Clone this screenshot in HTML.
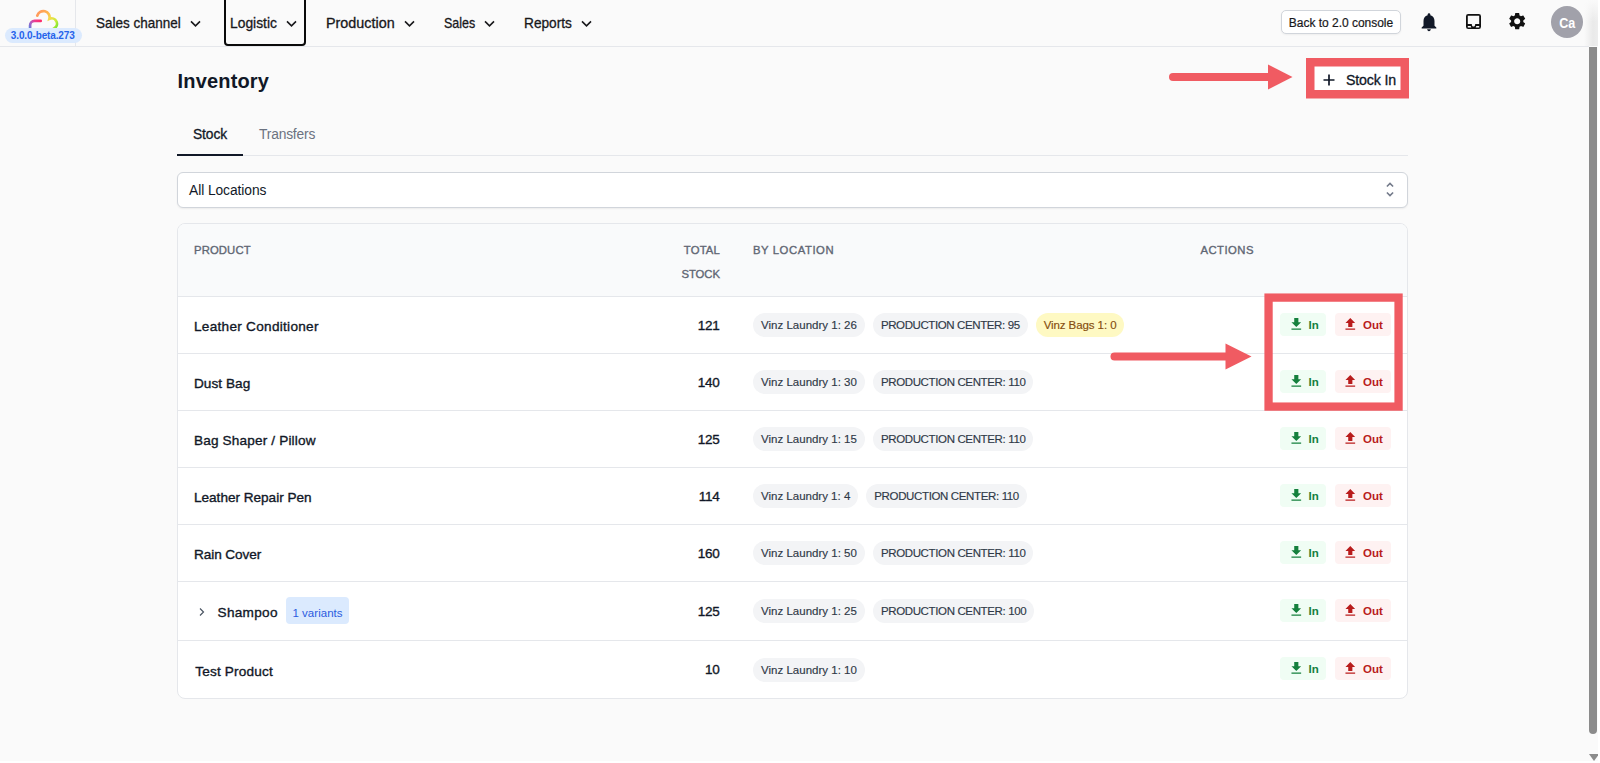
<!DOCTYPE html>
<html lang="en">
<head>
<meta charset="utf-8">
<title>Inventory</title>
<style>
*{box-sizing:border-box;margin:0;padding:0}
html,body{width:1600px;height:763px;overflow:hidden;background:#fff}
body{font-family:"Liberation Sans",sans-serif;color:#111827;position:relative;-webkit-font-smoothing:antialiased}
.app{position:absolute;left:0;top:0;width:1598px;height:761px;background:#fafafa;overflow:hidden}
/* header */
header{position:absolute;left:0;top:0;width:1589px;height:47px;border-bottom:1px solid #e5e7eb}
.logo{position:absolute;left:0;top:0;width:76px;height:46px;border-right:1px solid #e5e7eb}
.logo svg{position:absolute;left:24px;top:4px}
.ver{position:absolute;left:5px;top:28px;width:77px;height:15px;border-radius:8px;background:#dbeafe;color:#2563eb;font-size:10px;font-weight:700;line-height:16px;text-align:center;white-space:nowrap;text-indent:-1.5px}
nav .it{position:absolute;top:0;height:46px;line-height:46px;font-size:14.2px;white-space:nowrap;color:#18181b;-webkit-text-stroke:.3px #18181b}
nav .it svg{position:absolute;top:19.6px}
.sx{display:inline-block;transform-origin:0 50%}
nav .focus{position:absolute;left:224px;top:-4px;width:82px;height:50px;border:2px solid #0a0a0a;border-radius:4px}
.back{position:absolute;left:1281px;top:10px;width:120px;height:24px;border:1px solid #d1d5db;border-radius:5px;background:#fff;font-size:12px;line-height:24px;-webkit-text-stroke:.2px #18181b;text-align:center;color:#18181b;white-space:nowrap;box-shadow:0 1px 2px rgba(0,0,0,.05)}
.hicon{position:absolute}
.avatar{position:absolute;left:1551px;top:5.5px;width:32px;height:32px;border-radius:50%;background:#a1a1aa;color:#fff;font-size:14.4px;font-weight:700;line-height:35.6px;text-align:center;overflow:hidden}
.avatar span{display:inline-block;transform:scaleX(.87)}
/* scrollbar */
.sb-shade{position:absolute;left:1584px;top:0;width:14px;height:46px;background:linear-gradient(to bottom,#fafafa 0,rgba(250,250,250,0) 22px),linear-gradient(to right,rgba(0,0,0,0),rgba(0,0,0,.065) 65%,rgba(0,0,0,.05))}
.sb-thumb{position:absolute;left:1589px;top:47px;width:8px;height:687px;background:#8b8b8b;border-radius:0 0 4px 4px}
.sb-arrow{position:absolute;left:1588.5px;top:753.5px;width:0;height:0;border-left:5px solid transparent;border-right:5px solid transparent;border-top:7px solid #8b8b8b}
/* main */
h1{position:absolute;left:177.6px;top:66.4px;font-size:20px;line-height:30px;font-weight:700;color:#111827;white-space:nowrap}
.tabs{position:absolute;left:177px;top:112px;width:1231px;height:44px;border-bottom:1px solid #e5e7eb}
.tab{position:absolute;top:0;height:44px;line-height:45px;font-size:13.8px;white-space:nowrap}
.tab.on{left:0;width:66px;text-align:center;color:#111827;border-bottom:2px solid #111827;-webkit-text-stroke:.3px #111827}
.tab.off{left:82px;color:#6b7280}
.select{position:absolute;left:177px;top:172px;width:1231px;height:36px;background:#fff;border:1px solid #d1d5db;border-radius:6px;box-shadow:0 1px 2px rgba(0,0,0,.06);font-size:13.8px;line-height:35px;padding-left:11px;color:#111827}
.select svg{position:absolute;right:12.1px;top:8px}
/* table */
.card{position:absolute;left:177px;top:223px;width:1231px;height:476px;border:1px solid #e5e7eb;border-radius:8px;background:#fff;overflow:hidden}
table{border-collapse:separate;border-spacing:0;width:1229px;table-layout:fixed}
thead th{height:72px;background:#f9fafb}
th{font-size:11.3px;font-weight:400;color:#5f6673;-webkit-text-stroke:.35px #5f6673;letter-spacing:.35px;text-align:left;vertical-align:top;line-height:24px;padding-top:14px;text-transform:uppercase}
tbody td{height:57px;border-top:1px solid #e5e7eb}
tbody tr.tall td{height:59px}
tbody tr:last-child td{height:58px}
td{vertical-align:middle;white-space:nowrap}
.c1{width:459px;padding-left:16px}
.c2{width:99px;text-align:right;padding-right:16px}
th.c2{text-align:right}
.c3{width:447px;padding-left:17px}
.c4{width:225px;padding-left:16px}
th.c4{padding-left:17.5px}
.name{position:relative;top:1.2px;font-size:13.6px;color:#111827;-webkit-text-stroke:.35px #111827}
.name.nt{margin-left:1.2px}
tr.tall .name{top:2px}
tr.tall .chev{top:.5px}
.num{position:relative;top:-0.2px;left:-0.6px;font-size:13.5px;color:#111827;-webkit-text-stroke:.35px #111827}
.pill{display:inline-block;height:24px;line-height:24px;border-radius:12px;background:#f3f4f6;color:#2f3947;-webkit-text-stroke:.15px #2f3947;font-size:11.5px;padding:0 8px;margin-right:8px;vertical-align:middle}
.pill.y{background:#fef9c3;color:#854d0e;-webkit-text-stroke:.15px #854d0e}
.var{display:inline-block;position:relative;top:-.8px;height:27px;line-height:32px;border-radius:4px;background:#dbeafe;color:#2b5ce0;font-size:11.5px;padding:0 6px;margin-left:8.5px;vertical-align:middle}
.chev{margin-left:4px;margin-right:11.5px;vertical-align:middle;position:relative;top:0px}
.act{display:inline-block;height:23px;line-height:25px;top:-1px;border-radius:4px;font-size:11.5px;font-weight:700;vertical-align:middle;position:relative}
.act.in{width:46px;background:#f0fdf4;color:#15803d;margin-left:81px;padding-left:28.4px}
.act.out{width:56px;background:#fef2f2;color:#b91c1c;margin-left:9px;padding-left:28px}
.act.out svg{left:7.3px}
.act svg{position:absolute;left:7.8px;top:3.2px}
/* stock in */
.stockin{position:absolute;left:1314px;top:66px;width:88px;height:25px;background:#fff;font-size:14.2px;line-height:29px;color:#111827;white-space:nowrap;-webkit-text-stroke:.3px #111827;padding-left:32px;overflow:hidden}
.stockin svg{position:absolute;left:9px;top:8px}
/* annotations */
.ann{position:absolute;border:8px solid #f05b62;z-index:5}
.arrow{position:absolute;z-index:5}
</style>
</head>
<body>
<div class="app">
<header>
  <div class="logo">
    <svg width="40" height="24" viewBox="0 0 40 24" fill="none" stroke-width="2.7" stroke-linecap="round">
      <defs>
        <linearGradient id="g1" gradientUnits="userSpaceOnUse" x1="17" y1="16" x2="5" y2="24"><stop offset="0" stop-color="#ff2a68"/><stop offset=".4" stop-color="#ee3c90"/><stop offset=".72" stop-color="#a862c6"/><stop offset="1" stop-color="#5a7cdb"/></linearGradient>
        <linearGradient id="g2" gradientUnits="userSpaceOnUse" x1="12" y1="9" x2="33" y2="24"><stop offset="0" stop-color="#ff9660"/><stop offset=".35" stop-color="#ffb350"/><stop offset=".56" stop-color="#f3dc4c"/><stop offset=".8" stop-color="#c9ec38"/><stop offset="1" stop-color="#74e534"/></linearGradient>
      </defs>
      <path d="M16.7 16.9 H10.6 A4.5 4.5 0 0 0 6.100 21.400 V25" stroke="url(#g1)"/>
      <path d="M13.3 11.7 A6.2 6.2 0 0 1 25.400 14.900 A4.3 4.3 0 1 1 29.900 24.5" stroke="url(#g2)"/>
    </svg>
    <div class="ver"><span class="t" style="letter-spacing:-0.13px">3.0.0-beta.273</span></div>
  </div>
  <nav>
    <div class="focus"></div>
    <div class="it" style="left:96px"><span class="t sx" style="transform:scaleX(0.950)">Sales channel</span><svg style="left:93.7px" width="11" height="8" viewBox="0 0 11 8"><path d="M1 1.4 L5.5 5.8 L10 1.4" fill="none" stroke="#18181b" stroke-width="1.6"/></svg></div>
    <div class="it" style="left:230px"><span class="t sx" style="transform:scaleX(0.975)">Logistic</span><svg style="left:56px" width="11" height="8" viewBox="0 0 11 8"><path d="M1 1.4 L5.5 5.8 L10 1.4" fill="none" stroke="#18181b" stroke-width="1.6"/></svg></div>
    <div class="it" style="left:326px"><span class="t sx" style="transform:scaleX(1.013)">Production</span><svg style="left:78px" width="11" height="8" viewBox="0 0 11 8"><path d="M1 1.4 L5.5 5.8 L10 1.4" fill="none" stroke="#18181b" stroke-width="1.6"/></svg></div>
    <div class="it" style="left:444px"><span class="t sx" style="transform:scaleX(0.879)">Sales</span><svg style="left:40px" width="11" height="8" viewBox="0 0 11 8"><path d="M1 1.4 L5.5 5.8 L10 1.4" fill="none" stroke="#18181b" stroke-width="1.6"/></svg></div>
    <div class="it" style="left:524px"><span class="t sx" style="transform:scaleX(0.964)">Reports</span><svg style="left:56.8px" width="11" height="8" viewBox="0 0 11 8"><path d="M1 1.4 L5.5 5.8 L10 1.4" fill="none" stroke="#18181b" stroke-width="1.6"/></svg></div>
  </nav>
  <div class="back"><span class="t" style="letter-spacing:-0.02px">Back to 2.0 console</span></div>
  <svg class="hicon" style="left:1418.2px;top:10.7px" width="22" height="22" viewBox="0 0 24 24"><path fill="#111827" d="M12 22c1.1 0 2-.9 2-2h-4c0 1.1.89 2 2 2zm6-6v-5c0-3.07-1.64-5.64-4.5-6.32V4c0-.83-.67-1.5-1.5-1.5s-1.5.67-1.5 1.5v.68C7.63 5.36 6 7.92 6 11v5l-2 2v1h16v-1l-2-2z"/></svg>
  <svg class="hicon" style="left:1465.9px;top:13.9px" width="15" height="15" viewBox="0 0 15 15"><path fill="#111" fill-rule="evenodd" d="M2.3 0H12.7A2.3 2.3 0 0 1 15 2.3V12.7A2.3 2.3 0 0 1 12.700 15H2.3A2.3 2.3 0 0 1 0 12.700V2.3A2.3 2.3 0 0 1 2.3 0ZM1.8 1.8V9.9H5.800C5.800 11.600 6.600 12.600 7.500 12.600C8.400 12.600 9.200 11.600 9.200 9.900H13.2V1.8ZM1.8 12H4.700L5.300 13.4H1.8ZM13.2 12H10.3L9.700 13.400H13.2Z"/></svg>
  <svg class="hicon" style="left:1506.6px;top:11.3px" width="20.4" height="20.4" viewBox="0 0 24 24"><path fill="#111" d="M19.14 12.94c.04-.3.06-.61.06-.94 0-.32-.02-.64-.07-.94l2.03-1.58c.18-.14.23-.41.12-.61l-1.92-3.32c-.12-.22-.37-.29-.59-.22l-2.39.96c-.5-.38-1.03-.7-1.62-.94l-.36-2.54c-.04-.24-.24-.41-.48-.41h-3.84c-.24 0-.43.17-.47.41l-.36 2.54c-.59.24-1.13.57-1.62.94l-2.39-.96c-.22-.08-.47 0-.59.22L2.74 8.87c-.12.21-.08.47.12.61l2.03 1.58c-.05.3-.09.63-.09.94s.02.64.07.94l-2.03 1.58c-.18.14-.23.41-.12.61l1.92 3.32c.12.22.37.29.59.22l2.39-.96c.5.38 1.03.7 1.62.94l.36 2.54c.05.24.24.41.48.41h3.84c.24 0 .44-.17.47-.41l.36-2.54c.59-.24 1.13-.56 1.62-.94l2.39.96c.22.08.47 0 .59-.22l1.92-3.32c.12-.22.07-.47-.12-.61l-2.01-1.58zM12 15.6c-1.98 0-3.600-1.62-3.600-3.600s1.620-3.600 3.600-3.600 3.600 1.620 3.600 3.600-1.620 3.600-3.600 3.600z"/></svg>
  <div class="avatar"><span>Ca</span></div>
</header>
<div class="sb-shade"></div>
<div class="sb-thumb"></div>
<div class="sb-arrow"></div>

<main>
  <h1><span class="t" style="letter-spacing:0.16px">Inventory</span></h1>
  <div class="stockin"><svg width="12" height="12" viewBox="0 0 12 12"><path d="M6 0.5V11.5M0.5 6H11.5" stroke="#111827" stroke-width="1.7" fill="none"/></svg><span class="t" style="letter-spacing:-0.15px">Stock In</span></div>
  <svg class="arrow" style="left:1300px;top:52px" width="116" height="54" viewBox="0 0 116 54"><rect x="10.25" y="10.25" width="94.5" height="32" fill="none" stroke="#f05b62" stroke-width="8.5"/></svg>
  <svg class="arrow" style="left:1165px;top:60px" width="132" height="34" viewBox="0 0 132 34"><path d="M8 17H106" stroke="#f05b62" stroke-width="8" stroke-linecap="round" fill="none"/><path d="M103 4.5L127.5 17L103 29.5Z" fill="#f05b62"/></svg>
  <svg class="arrow" style="left:1258px;top:287px" width="152" height="130" viewBox="0 0 152 130"><rect x="10.55" y="10.6" width="130" height="109" fill="none" stroke="#f05b62" stroke-width="8.3"/></svg>
  <svg class="arrow" style="left:1106px;top:339px" width="150" height="34" viewBox="0 0 150 34"><path d="M8.5 17.5H122" stroke="#f05b62" stroke-width="8" stroke-linecap="round" fill="none"/><path d="M119.5 4.5L145.5 17.5L119.5 30.5Z" fill="#f05b62"/></svg>
  <div class="tabs"><div class="tab on"><span class="t" style="letter-spacing:-0.11px">Stock</span></div><div class="tab off"><span class="t" style="letter-spacing:-0.18px">Transfers</span></div></div>
  <div class="select"><span class="t" style="letter-spacing:-0.07px">All Locations</span><svg width="10" height="18" viewBox="0 0 10 18"><path d="M1.9 5.5 L5 2.4 L8.1 5.5 M1.9 11.5 L5 14.6 L8.1 11.5" fill="none" stroke="#737a8a" stroke-width="1.6"/></svg></div>
  <div class="card">
  <table>
    <thead><tr><th class="c1"><span class="t" style="letter-spacing:0.12px">Product</span></th><th class="c2"><span class="t" style="letter-spacing:0.16px">Total</span><br><span class="t" style="letter-spacing:-0.02px">Stock</span></th><th class="c3"><span class="t" style="letter-spacing:0.57px">By Location</span></th><th class="c4"><span class="t" style="letter-spacing:0.46px">Actions</span></th></tr></thead>
    <tbody id="tb">
    <tr><td class="c1"><span class="name" style="letter-spacing:0.28px">Leather Conditioner</span></td><td class="c2"><span class="num" style="letter-spacing:-0.30px">121</span></td><td class="c3"><span class="pill" style="letter-spacing:0.01px">Vinz Laundry 1: 26</span><span class="pill" style="letter-spacing:-0.39px">PRODUCTION CENTER: 95</span><span class="pill y" style="letter-spacing:-0.08px">Vinz Bags 1: 0</span></td><td class="c4"><span class="act in"><svg width="16.6" height="16.6" viewBox="0 0 24 24"><path fill="#15803d" d="M19 9h-4V3H9v6H5l7 7 7-7zM5 18v2h14v-2H5z"/></svg><span style="letter-spacing:0.09px">In</span></span><span class="act out"><svg width="16.6" height="16.6" viewBox="0 0 24 24"><path fill="#b91c1c" d="M9 16h6v-6h4l-7-7-7 7h4v6zm-4 2h14v2H5v-2z"/></svg><span>Out</span></span></td></tr>
    <tr><td class="c1"><span class="name" style="letter-spacing:0.04px">Dust Bag</span></td><td class="c2"><span class="num" style="letter-spacing:-0.30px">140</span></td><td class="c3"><span class="pill" style="letter-spacing:0.01px">Vinz Laundry 1: 30</span><span class="pill" style="letter-spacing:-0.36px">PRODUCTION CENTER: 110</span></td><td class="c4"><span class="act in"><svg width="16.6" height="16.6" viewBox="0 0 24 24"><path fill="#15803d" d="M19 9h-4V3H9v6H5l7 7 7-7zM5 18v2h14v-2H5z"/></svg><span style="letter-spacing:0.09px">In</span></span><span class="act out"><svg width="16.6" height="16.6" viewBox="0 0 24 24"><path fill="#b91c1c" d="M9 16h6v-6h4l-7-7-7 7h4v6zm-4 2h14v2H5v-2z"/></svg><span>Out</span></span></td></tr>
    <tr><td class="c1"><span class="name" style="letter-spacing:0.16px">Bag Shaper / Pillow</span></td><td class="c2"><span class="num" style="letter-spacing:-0.30px">125</span></td><td class="c3"><span class="pill" style="letter-spacing:0.01px">Vinz Laundry 1: 15</span><span class="pill" style="letter-spacing:-0.36px">PRODUCTION CENTER: 110</span></td><td class="c4"><span class="act in"><svg width="16.6" height="16.6" viewBox="0 0 24 24"><path fill="#15803d" d="M19 9h-4V3H9v6H5l7 7 7-7zM5 18v2h14v-2H5z"/></svg><span style="letter-spacing:0.09px">In</span></span><span class="act out"><svg width="16.6" height="16.6" viewBox="0 0 24 24"><path fill="#b91c1c" d="M9 16h6v-6h4l-7-7-7 7h4v6zm-4 2h14v2H5v-2z"/></svg><span>Out</span></span></td></tr>
    <tr><td class="c1"><span class="name" style="letter-spacing:-0.02px">Leather Repair Pen</span></td><td class="c2"><span class="num" style="letter-spacing:-0.30px">114</span></td><td class="c3"><span class="pill">Vinz Laundry 1: 4</span><span class="pill" style="letter-spacing:-0.36px">PRODUCTION CENTER: 110</span></td><td class="c4"><span class="act in"><svg width="16.6" height="16.6" viewBox="0 0 24 24"><path fill="#15803d" d="M19 9h-4V3H9v6H5l7 7 7-7zM5 18v2h14v-2H5z"/></svg><span style="letter-spacing:0.09px">In</span></span><span class="act out"><svg width="16.6" height="16.6" viewBox="0 0 24 24"><path fill="#b91c1c" d="M9 16h6v-6h4l-7-7-7 7h4v6zm-4 2h14v2H5v-2z"/></svg><span>Out</span></span></td></tr>
    <tr><td class="c1"><span class="name" style="letter-spacing:-0.09px">Rain Cover</span></td><td class="c2"><span class="num" style="letter-spacing:-0.30px">160</span></td><td class="c3"><span class="pill" style="letter-spacing:0.01px">Vinz Laundry 1: 50</span><span class="pill" style="letter-spacing:-0.36px">PRODUCTION CENTER: 110</span></td><td class="c4"><span class="act in"><svg width="16.6" height="16.6" viewBox="0 0 24 24"><path fill="#15803d" d="M19 9h-4V3H9v6H5l7 7 7-7zM5 18v2h14v-2H5z"/></svg><span style="letter-spacing:0.09px">In</span></span><span class="act out"><svg width="16.6" height="16.6" viewBox="0 0 24 24"><path fill="#b91c1c" d="M9 16h6v-6h4l-7-7-7 7h4v6zm-4 2h14v2H5v-2z"/></svg><span>Out</span></span></td></tr>
    <tr class="tall"><td class="c1"><svg class="chev" width="8" height="10" viewBox="0 0 8 10"><path d="M2 1.5 L5.5 5 L2 8.5" fill="none" stroke="#4b5563" stroke-width="1.2"/></svg><span class="name" style="letter-spacing:0.31px">Shampoo</span><span class="var" style="letter-spacing:0.04px">1 variants</span></td><td class="c2"><span class="num" style="letter-spacing:-0.30px">125</span></td><td class="c3"><span class="pill" style="letter-spacing:0.01px">Vinz Laundry 1: 25</span><span class="pill" style="letter-spacing:-0.36px">PRODUCTION CENTER: 100</span></td><td class="c4"><span class="act in"><svg width="16.6" height="16.6" viewBox="0 0 24 24"><path fill="#15803d" d="M19 9h-4V3H9v6H5l7 7 7-7zM5 18v2h14v-2H5z"/></svg><span style="letter-spacing:0.09px">In</span></span><span class="act out"><svg width="16.6" height="16.6" viewBox="0 0 24 24"><path fill="#b91c1c" d="M9 16h6v-6h4l-7-7-7 7h4v6zm-4 2h14v2H5v-2z"/></svg><span>Out</span></span></td></tr>
    <tr><td class="c1"><span class="name nt" style="letter-spacing:0.19px">Test Product</span></td><td class="c2"><span class="num" style="letter-spacing:-0.30px">10</span></td><td class="c3"><span class="pill" style="letter-spacing:0.01px">Vinz Laundry 1: 10</span></td><td class="c4"><span class="act in"><svg width="16.6" height="16.6" viewBox="0 0 24 24"><path fill="#15803d" d="M19 9h-4V3H9v6H5l7 7 7-7zM5 18v2h14v-2H5z"/></svg><span style="letter-spacing:0.09px">In</span></span><span class="act out"><svg width="16.6" height="16.6" viewBox="0 0 24 24"><path fill="#b91c1c" d="M9 16h6v-6h4l-7-7-7 7h4v6zm-4 2h14v2H5v-2z"/></svg><span>Out</span></span></td></tr>
    </tbody>
  </table>
  </div>
</main>
</div>
</body>
</html>
